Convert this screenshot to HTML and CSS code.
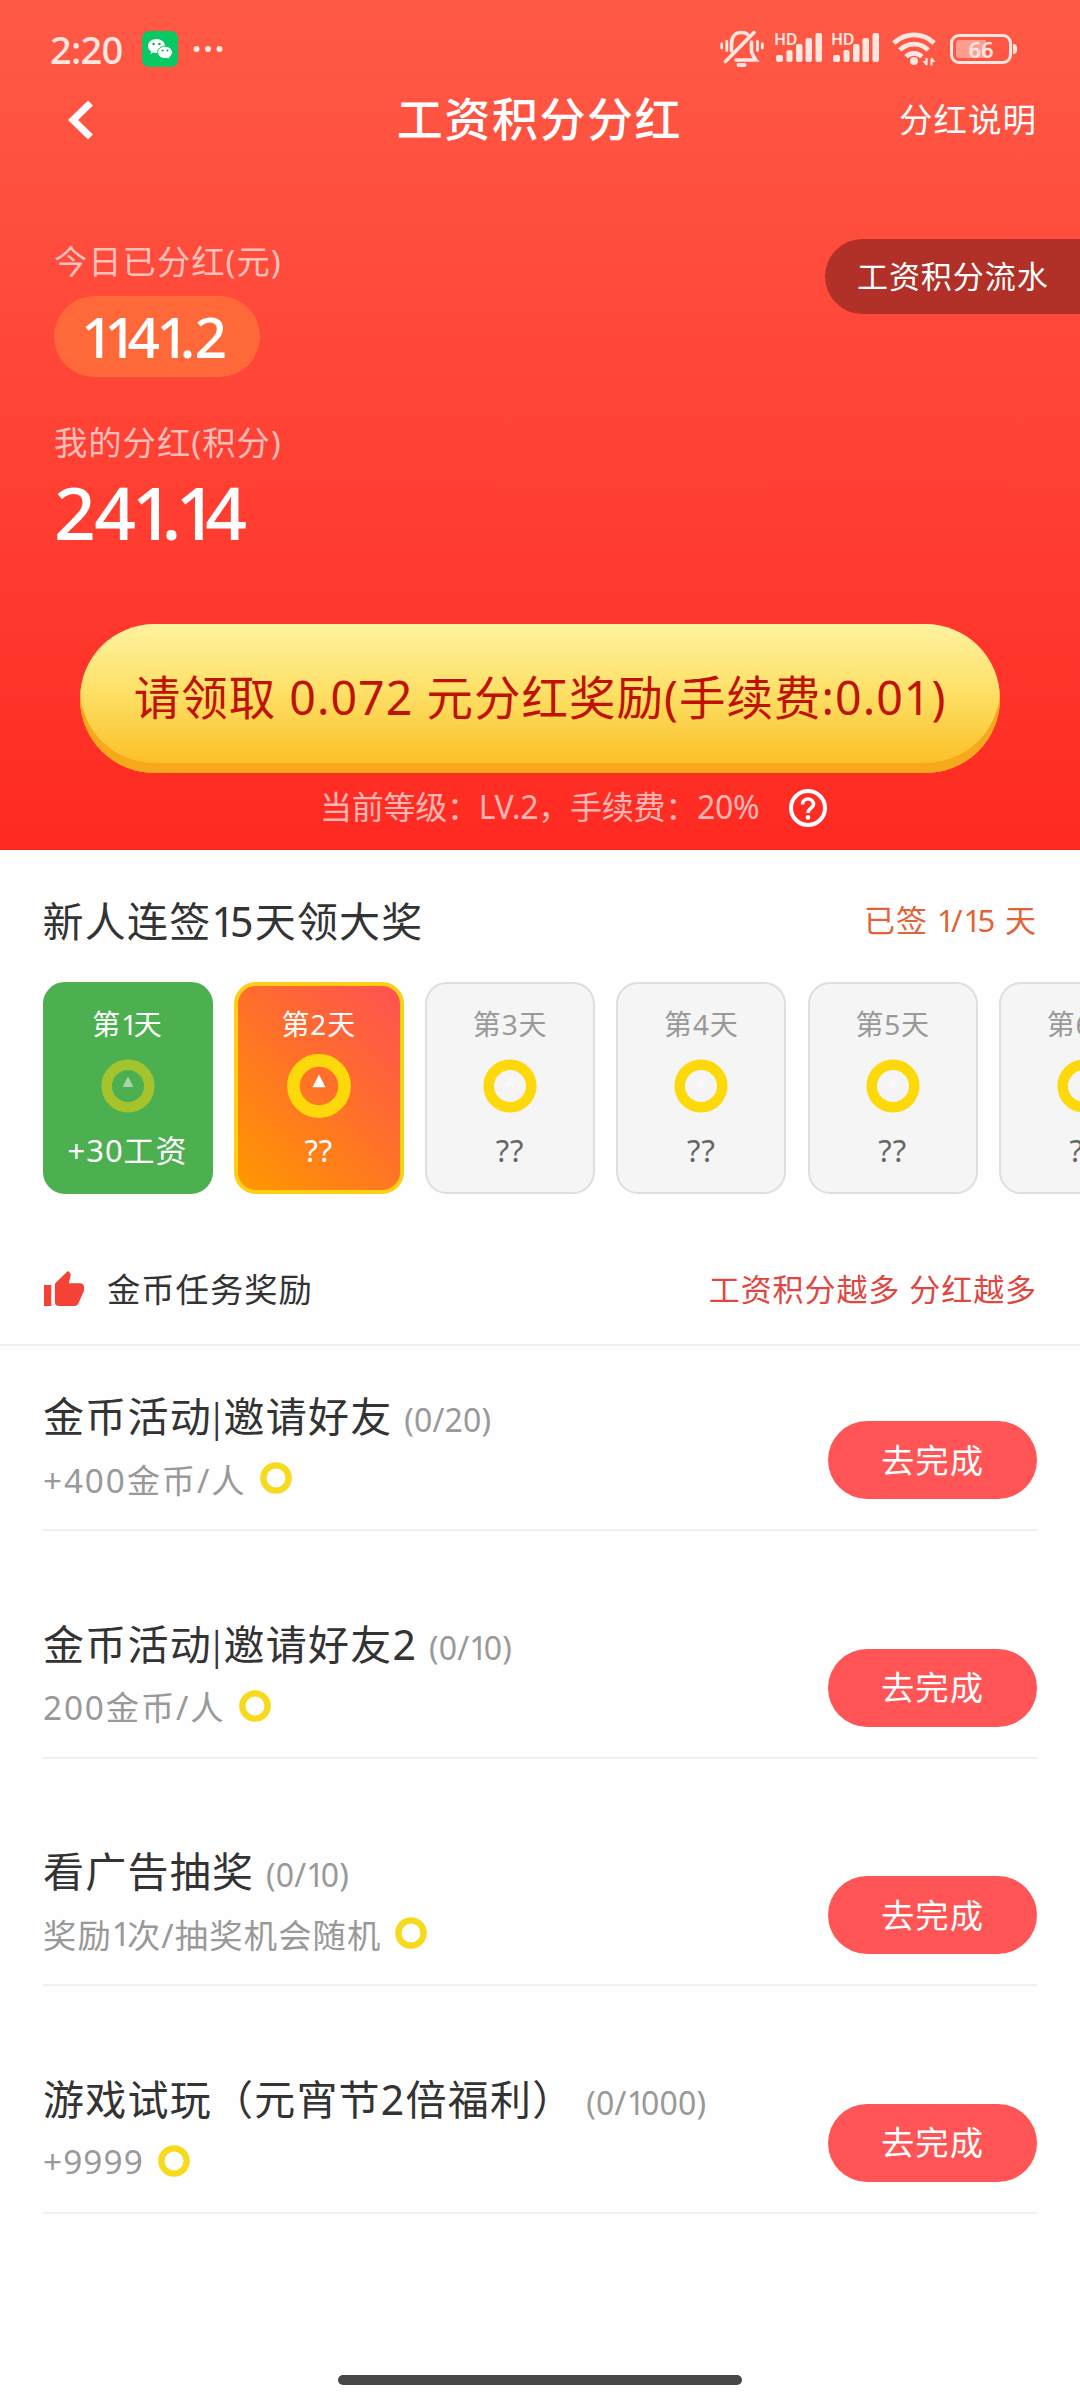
FILE: index.html
```html
<!DOCTYPE html>
<html lang="zh-CN">
<head>
<meta charset="utf-8">
<title>工资积分分红</title>
<link rel="stylesheet" href="styles.css">
</head>
<body>
<svg class="defs" width="0" height="0">
  <symbol id="coin" viewBox="0 0 54 54">
    <circle cx="27" cy="27" r="21.3" fill="none" stroke="#fdd80a" stroke-width="10.6"/>
    <path class="coin-mark" d="M27 17.500l5.400 10.600H21.600z"/>
  </symbol>
  <symbol id="coin-small" viewBox="0 0 32 32">
    <circle cx="16" cy="16" r="12.6" fill="none" stroke="#f6da1e" stroke-width="6.4"/>
  </symbol>
  <symbol id="signal" viewBox="0 0 48 36">
    <g fill="currentColor">
      <rect x="2" y="24" width="7" height="7" rx="2"/>
      <rect x="12.500" y="19" width="6" height="12" rx="2"/>
      <rect x="22" y="13" width="6.500" height="18" rx="2"/>
      <rect x="31.500" y="7" width="6.500" height="24" rx="2"/>
      <rect x="41.500" y="2" width="6.500" height="29" rx="2"/>
    </g>
  </symbol>
</svg>

<header class="hero">
  <div class="status">
    <span class="time">2:20</span>
    <svg class="wechat" viewBox="0 0 36 36">
      <rect width="36" height="36" rx="7" fill="#07c863"/>
      <path d="M14.500 8C9.800 8 6 11.100 6 15c0 2.200 1.200 4.100 3.100 5.400L8.500 23l2.900-1.500c1 .3 2 .5 3.100.5 4.700 0 8.500-3.100 8.500-7s-3.800-7-8.500-7z" fill="#fff"/>
      <path d="M23 15.200c-4.100 0-7.400 2.800-7.400 6.200s3.300 6.200 7.400 6.200c.9 0 1.800-.1 2.600-.4l2.500 1.400-.6-2.400c1.700-1.100 2.900-2.900 2.900-4.800 0-3.400-3.300-6.200-7.400-6.200z" fill="#fff" stroke="#07c863"/>
      <g fill="#07a853"><circle cx="11.600" cy="13" r="1.200"/><circle cx="17.400" cy="13" r="1.200"/><circle cx="20.600" cy="19.600" r="1"/><circle cx="25.400" cy="19.600" r="1"/></g>
    </svg>
    <svg class="dots" viewBox="0 0 32 8" fill="currentColor"><circle cx="4.500" cy="4" r="3"/><circle cx="16" cy="4" r="3"/><circle cx="27.500" cy="4" r="3"/></svg>
    <div class="status-right">
      <svg class="bell" viewBox="0 0 44 38" fill="none" stroke="currentColor" stroke-width="3.600" stroke-linecap="round">
        <path d="M11.500 21V13.500C11.500 6 16 2.500 21.500 2.500c2.500 0 4.500.6 6 1.800M31.500 12v8.500c0 3.500 1.500 5.500 4.500 9.500H16"/>
        <path d="M34 2.500L5.500 31.500"/>
        <path d="M18.500 35h6" stroke-width="4"/>
        <path d="M1.700 14v4M6.800 11.500v9M37.500 11.500v9M42.300 14v4" stroke-width="2.800"/>
      </svg>
      <span class="sim"><svg class="bars"><use href="#signal"/></svg><b class="hd">HD</b></span>
      <span class="sim sim-two"><svg class="bars"><use href="#signal"/></svg><b class="hd">HD</b></span>
      <svg class="wifi" viewBox="0 0 44 36" fill="none" stroke="currentColor" stroke-width="4.800">
        <path d="M1.800 12a29 29 0 0 1 40.400 0M7.800 19a20 20 0 0 1 28.400 0M14 25.600a11.500 11.500 0 0 1 16 0"/>
        <circle cx="22" cy="30" r="4" fill="currentColor" stroke="none"/>
        <path d="M34.500 27v7M39.500 34.500v-7" stroke-width="2.200"/>
        <path d="M30.500 30l4 5v-5zM43.500 31l-4-5v5z" fill="currentColor" stroke="none"/>
      </svg>
      <span class="battery">66</span>
    </div>
  </div>

  <nav class="nav">
    <svg class="back" viewBox="0 0 28 42"><path d="M23.500 4L6 21l17.500 17" fill="none" stroke="#fff" stroke-width="7"/></svg>
    <h1 class="title">工资积分分红</h1>
    <a class="rules">分红说明</a>
  </nav>

  <div class="summary">
    <div class="stats">
      <p class="label">今日已分红(元)</p>
      <p class="today"><i class="one">1</i><i class="one">1</i><i class="pre">4</i><i class="one">1</i>.2</p>
      <p class="label label-mine">我的分红(积分)</p>
      <p class="mine">2<i class="pre">4</i><i class="one">1</i><i class="pre-dot">.</i><i class="one">1</i>4</p>
    </div>
    <a class="flow">工资积分流水</a>
  </div>

  <button class="claim">请领取 0.072 元分红奖励(手续费:0.01)</button>
  <div class="level">
    <span class="level-text">当前等级：LV.2，手续费：20%</span>
    <svg class="help" viewBox="0 0 40 40" fill="none" stroke="#fff">
      <circle cx="20" cy="20" r="17" stroke-width="4"/>
      <path d="M14.500 16.500c0-3.300 2.400-5.500 5.500-5.500s5.500 2.200 5.500 5.200c0 3.800-5.500 4.300-5.500 8.800" stroke-width="3.600"/>
      <circle cx="20" cy="29.400" r="2.300" fill="#fff" stroke="none"/>
    </svg>
  </div>
</header>

<section class="checkin">
  <div class="checkin-head">
    <h2 class="checkin-title">新人连签<i class="one">1</i>5天领大奖</h2>
    <span class="checkin-count">已签 <i class="one">1</i>/<i class="one">1</i>5 天</span>
  </div>
  <div class="days">
    <div class="day day-done"><span class="day-name">第<i class="one">1</i>天</span><svg class="coin"><use href="#coin"/></svg><span class="prize">+30工资</span></div>
    <div class="day day-now"><span class="day-name">第2天</span><svg class="coin"><use href="#coin"/></svg><span class="prize">??</span></div>
    <div class="day"><span class="day-name">第3天</span><svg class="coin"><use href="#coin"/></svg><span class="prize">??</span></div>
    <div class="day"><span class="day-name">第4天</span><svg class="coin"><use href="#coin"/></svg><span class="prize">??</span></div>
    <div class="day"><span class="day-name">第5天</span><svg class="coin"><use href="#coin"/></svg><span class="prize">??</span></div>
    <div class="day"><span class="day-name">第6天</span><svg class="coin"><use href="#coin"/></svg><span class="prize">??</span></div>
  </div>
</section>

<section class="tasks">
  <div class="tasks-head">
    <svg class="thumb" viewBox="1 1 22 20" preserveAspectRatio="none"><path fill="#f44336" d="M1 21h4V9H1v12zm22-11c0-1.100-.9-2-2-2h-6.310l.95-4.570.03-.32c0-.41-.17-.79-.44-1.060L14.170 1 7.590 7.590C7.220 7.950 7 8.450 7 9v10c0 1.100.9 2 2 2h9c.83 0 1.540-.5 1.840-1.220l3.020-7.050c.09-.23.14-.47.14-.73v-2z"/></svg>
    <h3 class="tasks-title">金币任务奖励</h3>
    <span class="tasks-note">工资积分越多 分红越多</span>
  </div>
  <ul class="list">
    <li class="task">
      <div><p class="name">金币活动<i class="bar">|</i>邀请好友 <small class="progress">(0/20)</small></p>
      <p class="reward reward-each">+400金币/人<svg class="coin-s"><use href="#coin-small"/></svg></p></div>
      <button class="go">去完成</button>
    </li>
    <li class="task">
      <div><p class="name">金币活动<i class="bar">|</i>邀请好友2 <small class="progress">(0/<i class="one">1</i>0)</small></p>
      <p class="reward reward-each">200金币/人<svg class="coin-s"><use href="#coin-small"/></svg></p></div>
      <button class="go">去完成</button>
    </li>
    <li class="task">
      <div><p class="name">看广告抽奖 <small class="progress">(0/<i class="one">1</i>0)</small></p>
      <p class="reward">奖励<i class="one">1</i>次/抽奖机会随机<svg class="coin-s"><use href="#coin-small"/></svg></p></div>
      <button class="go">去完成</button>
    </li>
    <li class="task">
      <div><p class="name">游戏试玩（元宵节2倍福利） <small class="progress">(0/<i class="one">1</i>000)</small></p>
      <p class="reward">+9999<svg class="coin-s"><use href="#coin-small"/></svg></p></div>
      <button class="go">去完成</button>
    </li>
  </ul>
</section>
<footer class="home"><span class="home-bar"></span></footer>
</body>
</html>
```
FILE: styles.css
```css
* {
  box-sizing: border-box;
  margin: 0;
  padding: 0;
  letter-spacing: .03em;
}
html { overflow: hidden; }
body {
  width: 1080px;
  height: 2401px;
  display: flex;
  flex-direction: column;
  overflow: hidden;
  background: #fefefe;
  color: #333;
  font-family: "Noto Sans", "Noto Sans CJK SC", sans-serif;
  white-space: nowrap;
}
h1, h2, h3 { font-weight: 500; }
i { font-style: normal; }
button { border: 0; font-family: inherit; white-space: nowrap; }
svg { display: block; flex: none; }
.defs { position: absolute; }

/* proportional spacing around the digit 1 */
.one { letter-spacing: -.12em; }
.pre { letter-spacing: -.06em; }
.pre-dot { letter-spacing: -.08em; }
.bar {
  font-family: "Noto Sans CJK SC", sans-serif;
  font-size: 35px;
  line-height: 35px;
  letter-spacing: .06em;
  vertical-align: 1px;
}

/* hero */
.hero {
  flex: none;
  height: 850px;
  background: linear-gradient(#ff5a46, #ff4436 47%, #ff2a22);
  color: #fff;
}
.status {
  height: 98px;
  display: flex;
  align-items: center;
  padding: 0 68px 0 50px;
  color: #ffe6e0;
}
.time { width: 92px; font-size: 38px; line-height: 50px; letter-spacing: -.02em; font-weight: 500; }
.wechat { width: 36px; height: 36px; }
.dots { width: 32px; height: 8px; margin-left: 14px; }
.status-right { display: flex; align-items: center; margin-left: auto; }
.bell { width: 44px; height: 38px; margin-right: 10px; }
.sim { position: relative; width: 48px; height: 36px; }
.sim-two { margin: 0 13px 0 9px; }
.bars { width: 48px; height: 36px; }
.hd { position: absolute; left: 0; top: -1px; font-size: 16px; line-height: 18px; letter-spacing: -.02em; font-weight: 600; }
.wifi { width: 44px; height: 36px; margin-right: 14px; }
.battery {
  position: relative;
  width: 62px;
  height: 30px;
  padding: 3px;
  border: 3px solid currentColor;
  border-radius: 9px;
  background: linear-gradient(90deg, #ff9d91 60%, transparent 60%) content-box;
  font-size: 22px;
  line-height: 18px;
  font-weight: 600;
  letter-spacing: 0;
  text-align: center;
}
.battery::after {
  content: "";
  position: absolute;
  right: -8px;
  top: 7px;
  width: 4px;
  height: 10px;
  border-radius: 0 4px 4px 0;
  background: currentColor;
}
.nav {
  height: 44px;
  display: grid;
  grid-template-columns: 1fr auto 1fr;
  align-items: center;
  padding: 0 43px 0 42px;
}
.back { width: 28px; height: 42px; margin-left: 25px; }
.title { font-size: 46px; line-height: 40px; padding-bottom: 4px; letter-spacing: .034em; }
.rules { justify-self: end; font-size: 33.500px; line-height: 40px; padding-bottom: 3px; }
.summary {
  height: 482px;
  display: flex;
  justify-content: space-between;
  align-items: flex-start;
  padding: 97px 0 0 54px;
}
.label { font-size: 33.300px; line-height: 44px; padding-bottom: 2px; color: rgba(255, 255, 255, .66); }
.today {
  width: 206px;
  height: 81px;
  margin-top: 11px;
  padding-left: 27px;
  border-radius: 41px;
  background: #ff6838;
  font-size: 57px;
  line-height: 80px;
  font-weight: 500;
  letter-spacing: -.015em;
}
.label-mine { margin-top: 43px; }
.mine { font-size: 73px; line-height: 92px; font-weight: 500; letter-spacing: -.02em; }
.today .one, .mine .one { letter-spacing: -.165em; }
.flow {
  width: 255px;
  height: 75px;
  padding-left: 32px;
  border-radius: 38px 0 0 38px;
  background: #b13129;
  font-size: 31px;
  line-height: 74px;
}
.claim {
  display: block;
  width: 920px;
  height: 149px;
  margin: 0 auto;
  padding-bottom: 7px;
  border-radius: 75px;
  background: linear-gradient(#fff3a0, #fde067 45%, #fbc027 94%);
  box-shadow: inset 0 -10px 0 #f8a81d;
  color: #c01200;
  font-size: 46.500px;
  letter-spacing: .022em;
  font-weight: 400;
}
.level {
  display: flex;
  align-items: center;
  height: 72px;
  padding-left: 320px;
  gap: 29px;
  color: rgba(255, 255, 255, .68);
}
.level-text { font-size: 32px; line-height: 44px; padding-bottom: 4px; letter-spacing: -.008em; }
.help { width: 40px; height: 40px; margin-top: -2px; }

/* daily check-in */
.checkin { padding-left: 42.500px; flex: none; }
.checkin-head {
  height: 132px;
  display: flex;
  justify-content: space-between;
  align-items: center;
  padding: 5px 43px 0 0;
}
.checkin-title { font-size: 41px; font-weight: 400; }
.checkin-count { font-size: 31px; color: #de6538; }
.days { display: flex; gap: 21.300px; overflow: hidden; }
.day {
  flex: none;
  width: 170px;
  height: 212px;
  display: flex;
  flex-direction: column;
  align-items: center;
  border: 2px solid #dedede;
  border-radius: 22px;
  background: #f5f5f5;
  padding-top: 20px;
}
.day-name { font-size: 28px; line-height: 40px; color: #999; }
.coin { width: 54px; height: 54px; margin: 15px 0; fill: #f9f9f9; }
.prize { font-size: 31px; line-height: 44px; color: #666; }
.day-done { border-color: #4caf50; background: #4caf50; }
.day-now {
  border: 4px solid #fdcf12;
  background: linear-gradient(45deg, #ff9800, #ff6b2f 60%, #ff5252);
  padding-top: 18px;
}
.day-done .day-name, .day-done .prize, .day-now .day-name, .day-now .prize { color: #fff; }
.day-done .coin { opacity: .5; fill: #fff; }
.day-now .coin { transform: scale(1.2); fill: #fff; }

/* tasks */
.tasks { flex: none; }
.tasks-head {
  height: 152px;
  display: flex;
  align-items: center;
  padding: 39px 43px 0 44px;
  border-bottom: 2px solid #eee;
}
.thumb { width: 40px; height: 35px; }
.tasks-title { margin-left: 23px; font-size: 33.300px; line-height: 44px; font-weight: 400; }
.tasks-note { margin-left: auto; font-size: 31px; line-height: 44px; color: #e04740; }
.list { list-style: none; padding: 0 43px; }
.task {
  display: flex;
  justify-content: space-between;
  align-items: flex-end;
  padding: 42px 0 25px;
  margin-bottom: 42.500px;
  border-bottom: 2px solid #f0f0f0;
}
.name { height: 58px; font-size: 41px; line-height: 56px; font-weight: 400; }
.progress { font-size: 32px; line-height: 40px; letter-spacing: .005em; color: #999; }
.reward {
  display: flex;
  align-items: center;
  height: 48px;
  margin-top: 8px;
  margin-bottom: 2px;
  font-size: 33.300px;
  letter-spacing: .034em;
  color: #999;
}
.reward-each { letter-spacing: .056em; }
.coin-s { width: 32px; height: 32px; margin-left: 14px; }
.go {
  width: 209px;
  height: 78px;
  margin-bottom: 5px;
  padding-bottom: 4px;
  border-radius: 39px;
  background: #ff5556;
  color: #fff;
  font-size: 33.300px;
  font-weight: 400;
}
.home { margin-top: auto; height: 26px; display: flex; justify-content: center; }
.home-bar { width: 404px; height: 10px; border-radius: 5px; background: #474747; }
```
